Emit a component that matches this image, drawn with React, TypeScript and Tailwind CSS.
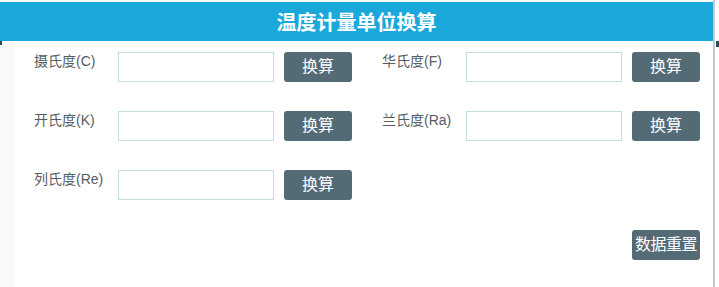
const font = "font-['Liberation_Sans','Noto_Sans_CJK_SC',sans-serif]";

const rows = [
  [{ label: "摄氏度(C)" }, { label: "华氏度(F)" }],
  [{ label: "开氏度(K)" }, { label: "兰氏度(Ra)" }],
  [{ label: "列氏度(Re)" }, null],
];

function Field({ label }: { label: string }) {
  return (
    <div className="flex items-start h-[30px]">
      <div className="w-[84px] text-[14px] leading-[16px] mt-[1px] text-[#555d62]">{label}</div>
      <input
        type="text"
        className="w-[156px] h-[30px] border border-[#c6dce3] bg-white outline-none"
      />
      <button className="ml-[10px] w-[68px] h-[30px] rounded-[3px] bg-[#546a75] text-white text-[16px] leading-[30px]">
        换算
      </button>
    </div>
  );
}

export default function App() {
  return (
    <div className={`w-[719px] h-[287px] bg-white ${font} relative overflow-hidden`}>
      <div className="w-[715px] h-full border-r-2 border-[#c8c8c8] flex flex-col">
        <div className="mt-[2px] h-[39px] bg-[#1aa8db] flex items-center justify-center">
          <h1 className="text-white text-[20px] font-bold font-['Noto_Sans_CJK_SC',serif]">
            温度计量单位换算
          </h1>
        </div>
        <div className="flex flex-1">
          <div className="w-[15px] bg-[#f9fbfb]" />
          <div className="flex-1 bg-white pl-[19px] pt-[11px]">
            <div className="flex flex-col gap-[29px]">
              {rows.map((row, i) => (
                <div key={i} className="grid grid-cols-[348px_318px]">
                  {row.map((f, j) => (f ? <Field key={j} label={f.label} /> : <div key={j} />))}
                </div>
              ))}
            </div>
            <div className="w-[666px] flex justify-end mt-[30px]">
              <button className="w-[68px] h-[30px] rounded-[3px] bg-[#546a75] text-white text-[16px] leading-[30px] tracking-[-0.5px]">
                数据重置
              </button>
            </div>
          </div>
        </div>
      </div>
      <div className="absolute left-0 top-[41px] w-[2px] h-[4px] bg-[#2a4a5a]" />
      <div className="absolute left-[716px] top-[41px] w-[3px] h-[6px] bg-[#2a4a5a]" />
    </div>
  );
}
